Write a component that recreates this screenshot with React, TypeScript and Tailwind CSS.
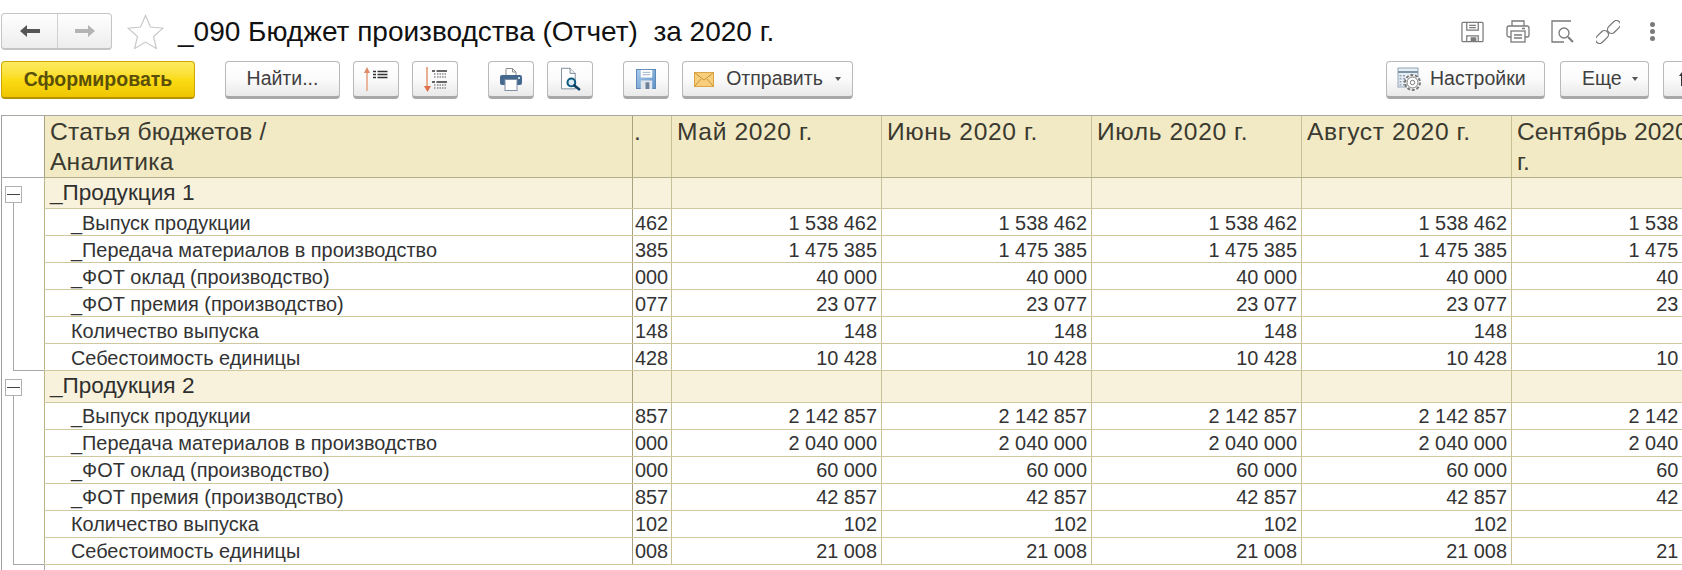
import React from "react";

const btn =
  "flex items-center justify-center h-[38px] shrink-0 rounded-[4px] border border-[#b9b9b9] border-b-[3px] border-b-[#a8a8a8] bg-linear-to-b from-white via-[#fbfbfb] to-[#e9e9e9] text-[19.5px] text-[#404040]";

const group = (title: string, rows: [string, string][]) => ({ title, rows });

const groups = [
  group("_Продукция 1", [
    ["_Выпуск продукции", "1 538 462"],
    ["_Передача материалов в производство", "1 475 385"],
    ["_ФОТ оклад (производство)", "40 000"],
    ["_ФОТ премия (производство)", "23 077"],
    ["Количество выпуска", "148"],
    ["Себестоимость единицы", "10 428"],
  ]),
  group("_Продукция 2", [
    ["_Выпуск продукции", "2 142 857"],
    ["_Передача материалов в производство", "2 040 000"],
    ["_ФОТ оклад (производство)", "60 000"],
    ["_ФОТ премия (производство)", "42 857"],
    ["Количество выпуска", "102"],
    ["Себестоимость единицы", "21 008"],
  ]),
];

const cols = [
  ["Май 2020 г."],
  ["Июнь 2020 г."],
  ["Июль 2020 г."],
  ["Август 2020 г."],
  ["Сентябрь 2020", "г."],
];

function Floppy({ c = "#7a7a7a" }: { c?: string }) {
  return (
    <svg width="23" height="22" viewBox="0 0 24 22" fill="none" stroke={c} strokeWidth="1.3">
      <path d="M2 1h20a1 1 0 0 1 1 1v18a1 1 0 0 1-1 1H2a1 1 0 0 1-1-1V2a1 1 0 0 1 1-1z" />
      <path d="M6 1v8h12V1M8.500 4h7M8.500 6.500h7M6 21v-6h12v6" />
      <rect x="10" y="16.500" width="6" height="4" fill={c} stroke="none" />
    </svg>
  );
}

function SortUp() {
  return (
    <svg width="24" height="24" viewBox="0 0 24 24" fill="none">
      <path d="M3 24V3" stroke="#eab59b" strokeWidth="2" />
      <path d="M0 6l3-6 3 6z" fill="#e08a66" />
      <path d="M9 4.500h3M13.500 4.500h10M9 7.500h3M13.500 7.500h10M9 10.500h3M13.500 10.500h10" stroke="#333" strokeWidth="1.600" />
    </svg>
  );
}

function SortDown() {
  return (
    <svg width="23" height="25" viewBox="0 0 23 25" fill="none">
      <path d="M3 0v20" stroke="#e8a587" strokeWidth="1.800" />
      <path d="M0 19h7l-3.500 6z" fill="#e0704a" />
      <path d="M8 4h3M12.500 4h10.500M8 15h3M12.500 15h10.500" stroke="#333" strokeWidth="1.500" />
      <path d="M10 7h2M13 7h10M10 10h2M13 10h10M10 18h2M13 18h10M10 21h2M13 21h10" stroke="#8a8a8a" strokeWidth="1.300" strokeDasharray="1.500 1" />
    </svg>
  );
}

function PrinterColor() {
  return (
    <svg width="22" height="23" viewBox="0 0 22 23" fill="none">
      <path d="M6 .5h6.500l3.500 3.500v6H6z" fill="#fff" stroke="#8d8d8d" />
      <path d="M12.500 .5v3.500H16" stroke="#8d8d8d" />
      <rect x="0" y="7" width="22" height="10" rx="2" fill="#45688f" />
      <rect x="5" y="11.500" width="12" height="11" fill="#fff" stroke="#7f8fa3" />
      <rect x="18" y="9" width="2" height="2" fill="#cfd9e6" />
    </svg>
  );
}

function PreviewColor() {
  return (
    <svg width="21" height="24" viewBox="0 0 24 28" fill="none">
      <path d="M1.500 1.500h10l6 6v18h-16z" fill="#fff" stroke="#6f7e8e" />
      <path d="M11.500 1.500v6h6" stroke="#6f7e8e" fill="#eef1f4" />
      <circle cx="13" cy="18" r="4.500" fill="#dcebf5" stroke="#0f5a83" strokeWidth="2.400" />
      <path d="M16.500 21.500L22 26" stroke="#0d3f63" strokeWidth="3" strokeLinecap="round" />
    </svg>
  );
}

function FloppyColor() {
  return (
    <svg width="20" height="20" viewBox="0 0 21 21" fill="none">
      <defs>
        <linearGradient id="fl" x1="0" y1="0" x2="1" y2="1">
          <stop offset="0" stopColor="#a8cbec" />
          <stop offset="1" stopColor="#5f93c9" />
        </linearGradient>
      </defs>
      <rect x="0.500" y="0.500" width="20" height="20" fill="url(#fl)" stroke="#5b86b4" />
      <rect x="5" y="1" width="12" height="8" fill="#fff" />
      <path d="M7 3.500h8M7 6h8" stroke="#9ab0c6" />
      <rect x="5" y="12" width="12" height="9" fill="#dfe6ec" />
      <rect x="10" y="14" width="4" height="7" fill="#6d8299" />
    </svg>
  );
}

function Envelope() {
  return (
    <svg width="20" height="15" viewBox="0 0 20 15" fill="none">
      <rect x="0.500" y="0.500" width="19" height="14" fill="#f7cf7c" stroke="#d9a441" />
      <path d="M1 1l9 7 9-7M1 14l6-7M19 14l-6-7" stroke="#c9923a" />
    </svg>
  );
}

function Settings() {
  return (
    <svg width="25" height="24" viewBox="0 0 25 24" fill="none">
      <rect x="1" y="1" width="20" height="19" fill="#e6edf3" stroke="#93a5b5" />
      <path d="M1 5h20" stroke="#7d93a6" strokeWidth="2" />
      <path d="M3.500 8v11M7 8v11" stroke="#93a5b5" strokeDasharray="1.500 1.500" strokeWidth="2" />
      <circle cx="15.500" cy="15.500" r="7.500" fill="#fff" stroke="#777" strokeWidth="2" strokeDasharray="3 1.700" />
      <circle cx="15.500" cy="15.500" r="5.500" fill="#fff" stroke="#777" />
      <circle cx="15.500" cy="15.500" r="2.200" stroke="#777" />
    </svg>
  );
}

function Caret() {
  return <span className="inline-block w-0 h-0 border-x-[3.500px] border-x-transparent border-t-[4px] border-t-[#555]" />;
}

function Cells({
  name,
  nameClass,
  bg,
  lead,
  vals,
  cellClass,
}: {
  name: string;
  nameClass: string;
  bg: string;
  lead: string;
  vals: string[];
  cellClass: string;
}) {
  return (
    <div className={`flex flex-1 border-b border-[#cfc79d] ${bg}`}>
      <div className={`w-[588px] shrink-0 border-l border-[#bdb68c] whitespace-nowrap ${nameClass}`}>{name}</div>
      <div className={`w-[39px] shrink-0 border-l border-[#a9a27c] pl-[2px] overflow-hidden ${cellClass}`}>{lead}</div>
      {vals.map((v, i) => (
        <div key={i} className={`w-[210px] shrink-0 border-l border-[#c9c196] pr-[4px] text-right whitespace-nowrap ${cellClass}`}>
          {v}
        </div>
      ))}
    </div>
  );
}

export default function App() {
  return (
    <div className="w-[1682px] h-[570px] overflow-hidden bg-white font-['Liberation_Sans',Arial,sans-serif] text-[#333]">
      {/* title bar */}
      <div className="h-[60px] flex items-center pl-[1px] pt-[3px]">
        <div className="flex h-[37px] w-[111px] rounded-[4px] border border-[#c4c4c4] border-b-[2px] bg-linear-to-b from-white to-[#ededed]">
          <div className="w-[56px] flex items-center justify-center border-r border-[#d0d0d0]">
            <svg width="22" height="14" viewBox="0 0 22 14">
              <path d="M8 1L1 7l7 6V9h13V5H8z" fill="#555" />
            </svg>
          </div>
          <div className="flex-1 flex items-center justify-center">
            <svg width="22" height="14" viewBox="0 0 22 14">
              <path d="M14 1l7 6-7 6V9H1V5h13z" fill="#b4b4b4" />
            </svg>
          </div>
        </div>
        <svg className="ml-[15px]" width="37" height="35" viewBox="0 0 37 35" fill="#fff" stroke="#c9c9c9" strokeWidth="1.200">
          <path d="M18.500 1.500l5 11.500 12.500 1.200-9.500 8.300 2.900 12-10.900-6.400L7.600 34.500l2.900-12L1 14.200 13.500 13z" />
        </svg>
        <h1 className="ml-[14px] pt-[1px] text-[28px] leading-none text-[#111] whitespace-pre">_090 Бюджет производства (Отчет)  за 2020 г.</h1>
        <div className="ml-auto flex items-center pr-[27px]">
          <Floppy />
          <svg className="ml-[22px]" width="24" height="23" viewBox="0 0 24 23" fill="none" stroke="#7a7a7a" strokeWidth="1.300">
            <path d="M6 6V1h12v5M5 17H3a2 2 0 0 1-2-2V8a2 2 0 0 1 2-2h18a2 2 0 0 1 2 2v7a2 2 0 0 1-2 2h-2" />
            <rect x="5" y="11" width="14" height="11" />
            <path d="M8 15h8M8 18h8M16 8.500h3" />
          </svg>
          <svg className="ml-[21px]" width="24" height="23" viewBox="0 0 24 23" fill="none" stroke="#7a7a7a" strokeWidth="1.300">
            <path d="M20 1H1v21h12" />
            <circle cx="13" cy="13" r="5" />
            <path d="M17 17l5 5" strokeWidth="2" />
          </svg>
          <svg className="ml-[21px]" width="24" height="24" viewBox="0 0 24 24" fill="none" stroke="#7a7a7a" strokeWidth="1.300">
            <rect x="-1.500" y="13" width="15" height="8" rx="4" transform="rotate(-45 6 17)" />
            <rect x="10.500" y="3" width="15" height="8" rx="4" transform="rotate(-45 18 7)" />
          </svg>
          <div className="ml-[30px] flex flex-col gap-[2px]">
            <span className="w-[5px] h-[5px] rounded-full bg-[#7a7a7a]" />
            <span className="w-[5px] h-[5px] rounded-full bg-[#7a7a7a]" />
            <span className="w-[5px] h-[5px] rounded-full bg-[#7a7a7a]" />
          </div>
        </div>
      </div>

      {/* toolbar */}
      <div className="h-[55px] flex items-start pt-[1px] pl-[1px]">
        <button className="flex items-center justify-center h-[38px] w-[194px] shrink-0 rounded-[4px] border border-[#cda800] border-b-[2px] border-b-[#b59300] bg-linear-to-b from-[#fdeb5e] via-[#fbdc14] to-[#eec500] text-[19.5px] font-bold text-[#5a4f0a]">
          Сформировать
        </button>
        <button className={`${btn} ml-[30px] w-[115px]`}>Найти...</button>
        <button className={`${btn} ml-[13px] w-[46px]`}><SortUp /></button>
        <button className={`${btn} ml-[13px] w-[46px]`}><SortDown /></button>
        <button className={`${btn} ml-[30px] w-[46px]`}><PrinterColor /></button>
        <button className={`${btn} ml-[13px] w-[46px]`}><PreviewColor /></button>
        <button className={`${btn} ml-[30px] w-[46px]`}><FloppyColor /></button>
        <button className={`${btn} ml-[13px] w-[171px] gap-[12px]`}>
          <Envelope />
          <span>Отправить</span>
          <Caret />
        </button>
        <button className={`${btn} ml-auto w-[159px] gap-[8px] !justify-start pl-[10px]`}>
          <Settings />
          <span>Настройки</span>
        </button>
        <button className={`${btn} ml-[15px] w-[89px] gap-[10px] !justify-start pl-[21px]`}>
          <span>Еще</span>
          <Caret />
        </button>
        <button className={`${btn} ml-[14px] w-[60px] -mr-[41px] !justify-start pl-[15px]`}>
          <svg width="6" height="14" viewBox="0 0 6 14"><path d="M3 0L0 4h2v10h2V4h2z" fill="#333" /></svg>
        </button>
      </div>

      {/* table */}
      <div className="ml-[1px] w-[1800px] border-t border-[#a8a8a0] border-l border-l-[#9e9e9e]">
        <div className="flex h-[62px]">
          <div className="w-[42px] shrink-0 border-b border-[#a8a8a8]" />
          <div className="flex flex-1 border-b border-[#b5ae8a] bg-[#f2e9c5] text-[24.6px] leading-[30px] text-[#3a3a30]">
            <div className="w-[588px] shrink-0 border-l border-[#a9a27c] pl-[5px] pt-[1px] tracking-[0.2px]">
              Статья бюджетов /<br />Аналитика
            </div>
            <div className="w-[39px] shrink-0 border-l border-[#a9a27c] pl-[1px] pt-[1px]">.</div>
            {cols.map((c, i) => (
              <div
                key={i}
                className={`w-[210px] shrink-0 border-l border-[#c9c196] pl-[5px] pt-[1px] whitespace-nowrap ${c[1] ? "tracking-normal" : "tracking-[0.6px]"}`}
              >
                {c[0]}
                {c[1] && <><br />{c[1]}</>}
              </div>
            ))}
          </div>
        </div>

        {groups.map((g, gi) => (
          <div key={gi}>
            <div className={`flex ${gi === 0 ? "h-[31px]" : "h-[32px]"}`}>
              <div className="w-[42px] shrink-0 flex flex-col pt-[8px]">
                <div className="flex items-center justify-center w-[17px] h-[17px] ml-[3px] border border-[#b0b0b0] bg-white">
                  <div className="w-[13px] h-px bg-[#444]" />
                </div>
                <div className="flex-1 ml-[11px] border-l border-[#a8a8a8]" />
              </div>
              <Cells
                name={g.title}
                nameClass="pl-[5px] text-[22.6px] leading-[29px] text-[#2f2f2f]"
                bg="bg-[#f8f2dd]"
                lead=""
                vals={["", "", "", "", ""]}
                cellClass=""
              />
            </div>
            {g.rows.map(([name, val], ri) => {
              const last = ri === g.rows.length - 1;
              const textClass =
                gi === 0
                  ? "pt-[1px] text-[19.9px] leading-[26px] text-[#333]"
                  : "text-[19.9px] leading-[26px] text-[#333]";
              return (
                <div key={ri} className="flex h-[27px]">
                  <div className="w-[42px] shrink-0">
                    <div className={`ml-[11px] h-[27px] border-l border-[#a8a8a8] ${last ? "border-b" : ""}`} />
                  </div>
                  <Cells
                    name={name}
                    nameClass={`pl-[26px] ${textClass}`}
                    bg="bg-white"
                    lead={val.slice(-3)}
                    vals={[val, val, val, val, val]}
                    cellClass={textClass}
                  />
                </div>
              );
            })}
          </div>
        ))}
        <div className="h-[10px] w-[43px] border-r border-[#a8a8a8]" />
      </div>
    </div>
  );
}
